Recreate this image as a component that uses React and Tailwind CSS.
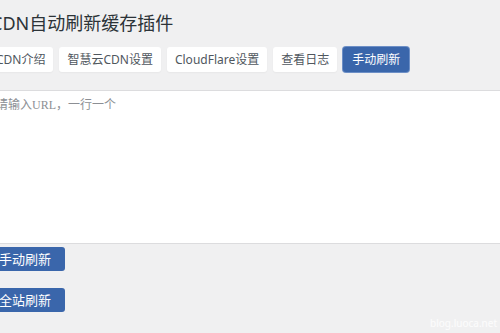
const tabs = ['CDN介绍', '智慧云CDN设置', 'CloudFlare设置', '查看日志', '手动刷新'];

const App = () => {
  return (
    <div
      className="relative w-[500px] h-[333px] overflow-hidden bg-[#f0f0f1]"
      style={{ fontFamily: '"Noto Sans", "Noto Sans CJK SC", sans-serif' }}
    >
      {/* Title */}
      <h1 className="ml-[-9px] pt-[11px] h-[40px] text-[18px] leading-[24px] text-[#2c3338] whitespace-nowrap">
        CDN自动刷新缓存插件
      </h1>

      {/* Tabs */}
      <div className="ml-[-12px] mt-[7px] flex gap-[6px] whitespace-nowrap">
        {tabs.map((tab, i) => {
          const isActive = i === tabs.length - 1;
          return (
            <div
              key={tab}
              className={
                isActive
                  ? 'h-[25px] px-[9px] flex items-center rounded-[3px] bg-[#3a66ab] text-white text-[12px] shadow-[0_0_0_1px_#6d8fc6]'
                  : 'h-[25px] px-[8px] flex items-center rounded-[3px] bg-white text-[#50575e] text-[12px] shadow-[0_1px_2px_rgba(0,0,0,0.04)]'
              }
            >
              {tab}
            </div>
          );
        })}
      </div>

      {/* URL textarea */}
      <div className="mt-[18px] ml-[-14px] w-[530px] h-[154px] bg-white border-y border-[#dcdcde]">
        <div
          className="pl-[10px] pt-[6px] text-[12px] leading-[16px] text-[#8c8f94] whitespace-nowrap"
          style={{ fontFamily: '"Liberation Serif", "Noto Sans CJK SC", serif' }}
        >
          请输入URL，一行一个
        </div>
      </div>

      {/* Buttons */}
      <div className="ml-[-15px] mt-[3px] flex flex-col items-start gap-[17px]">
        <button className="h-[24px] px-[14px] rounded-[3px] bg-[#3a66ab] text-white text-[13px] leading-[24px] whitespace-nowrap">
          手动刷新
        </button>
        <button className="h-[24px] px-[14px] rounded-[3px] bg-[#3a66ab] text-white text-[13px] leading-[24px] whitespace-nowrap">
          全站刷新
        </button>
      </div>

      {/* Watermark */}
      <div className="absolute right-[3px] bottom-[4px] text-[10px] leading-[12px] text-white/80 whitespace-nowrap">
        blog.luoca.net
      </div>
    </div>
  );
};

export default App;
